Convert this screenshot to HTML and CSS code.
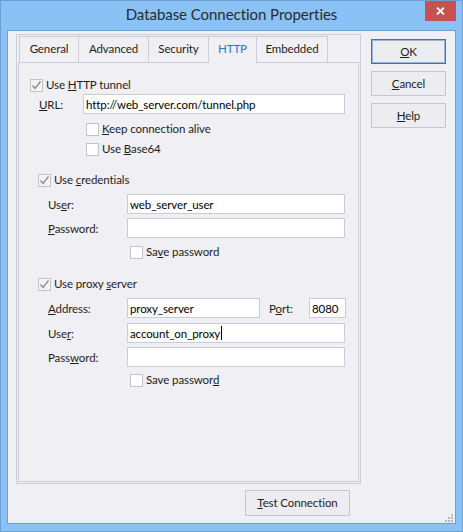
FILE: index.html
```html
<!DOCTYPE html>
<html>
<head>
<meta charset="utf-8">
<title>Database Connection Properties</title>
<link rel="stylesheet" href="styles.css">
</head>
<body>
<div class="window">
  <div class="titlebar">
    <div></div>
    <div class="title">Database Connection Properties</div>
    <div class="close">
      <svg width="9" height="8" viewBox="0 0 9 8"><path d="M1 0.5 L8 7.5 M8 0.5 L1 7.5" stroke="#fff" stroke-width="1.8" fill="none"/></svg>
    </div>
  </div>
  <div class="client">
    <div class="leftcol">
      <div class="tabbox">
        <div class="tabs">
          <div class="tab t-general">General</div>
          <div class="tab t-advanced">Advanced</div>
          <div class="tab t-security">Security</div>
          <div class="tab t-http sel">HTTP</div>
          <div class="tab t-embedded">Embedded</div>
        </div>
        <div class="panel">
          <div class="row chk r1 lvl1">
            <span class="cb on"><svg width="11" height="11" viewBox="0 0 11 11"><path d="M1.5 5.5 L4 8.5 L9.5 1.5" stroke="#8c8c8c" stroke-width="1.4" fill="none"/></svg></span>
            <span class="txt">Use <u>H</u>TTP tunnel</span>
          </div>
          <div class="row url">
            <span class="lbl lbl-url"><u>U</u>RL:</span>
            <span class="inp w-url">http://web_server.com/tunnel.php</span>
          </div>
          <div class="row chk r3 sub">
            <span class="cb"></span>
            <span class="txt"><u>K</u>eep connection alive</span>
          </div>
          <div class="row chk sub">
            <span class="cb"></span>
            <span class="txt">Use <u>B</u>ase64</span>
          </div>
          <div class="row chk r5 lvl2">
            <span class="cb on"><svg width="11" height="11" viewBox="0 0 11 11"><path d="M1.5 5.5 L4 8.5 L9.5 1.5" stroke="#8c8c8c" stroke-width="1.4" fill="none"/></svg></span>
            <span class="txt">Use <u>c</u>redentials</span>
          </div>
          <div class="row field m4">
            <span class="lbl lbl-f">Us<u>e</u>r:</span>
            <span class="inp w-f">web_server_user</span>
          </div>
          <div class="row field m4">
            <span class="lbl lbl-f"><u>P</u>assword:</span>
            <span class="inp w-f"></span>
          </div>
          <div class="row chk save m4">
            <span class="cb"></span>
            <span class="txt">Sa<u>v</u>e password</span>
          </div>
          <div class="row chk r9 lvl2">
            <span class="cb on"><svg width="11" height="11" viewBox="0 0 11 11"><path d="M1.5 5.5 L4 8.5 L9.5 1.5" stroke="#8c8c8c" stroke-width="1.4" fill="none"/></svg></span>
            <span class="txt">Use proxy <u>s</u>erver</span>
          </div>
          <div class="row field m4">
            <span class="lbl lbl-f"><u>A</u>ddress:</span>
            <span class="inp w-addr">proxy_server</span>
            <span class="lbl lbl-port">P<u>o</u>rt:</span>
            <span class="inp w-port">8080</span>
          </div>
          <div class="row field m5">
            <span class="lbl lbl-f">Use<u>r</u>:</span>
            <span class="inp w-f">account_on_proxy<span class="caret"></span></span>
          </div>
          <div class="row field m4">
            <span class="lbl lbl-f">Pass<u>w</u>ord:</span>
            <span class="inp w-f"></span>
          </div>
          <div class="row chk save m3">
            <span class="cb"></span>
            <span class="txt">Save passwor<u>d</u></span>
          </div>
        </div>
      </div>
      <div class="bottom">
        <div class="btn test"><span><u>T</u>est Connection</span></div>
      </div>
    </div>
    <div class="rightcol">
      <div class="btn ok"><span><u>O</u>K</span></div>
      <div class="btn"><span><u>C</u>ancel</span></div>
      <div class="btn"><span><u>H</u>elp</span></div>
    </div>
    <svg class="grip" width="8" height="8" viewBox="0 0 8 8">
      <rect x="6" y="0" width="2" height="2" fill="#b8b8bc"/>
      <rect x="3" y="3" width="2" height="2" fill="#b8b8bc"/>
      <rect x="6" y="3" width="2" height="2" fill="#b8b8bc"/>
      <rect x="0" y="6" width="2" height="2" fill="#b8b8bc"/>
      <rect x="3" y="6" width="2" height="2" fill="#b8b8bc"/>
      <rect x="6" y="6" width="2" height="2" fill="#b8b8bc"/>
    </svg>
  </div>
</div>
</body>
</html>
```
FILE: styles.css
```css
html, body {
  margin: 0;
  padding: 0;
}
body {
  background: #8ac2f5;
  font-family: Lato, "Noto Sans", sans-serif;
  font-size: 11.5px;
  letter-spacing: -0.1px;
  color: #1e1e1e;
}
u {
  text-decoration: underline;
  text-underline-offset: 1px;
}
.window {
  width: 463px;
  height: 532px;
  box-sizing: border-box;
  border: 1px solid #6d9fd2;
  padding: 0 6px 7px;
  display: flex;
  flex-direction: column;
  background: #8ac2f5;
}
.titlebar {
  height: 29px;
  flex: none;
  display: grid;
  grid-template-columns: 1fr auto 1fr;
  align-items: center;
}
.title {
  font-size: 15px;
  letter-spacing: -0.05px;
  color: #2b2b2b;
  padding-bottom: 3px;
}
.close {
  justify-self: end;
  align-self: start;
  width: 31px;
  height: 20px;
  background: #c75050;
  display: flex;
  align-items: center;
  justify-content: center;
}
.client {
  position: relative;
  box-sizing: border-box;
  height: 494px;
  border: 1px solid #6a9ed4;
  background: #efeff4;
  display: flex;
  gap: 10px;
  padding: 3px 0 0 8px;
}
.leftcol {
  display: flex;
  flex-direction: column;
  width: 345px;
}
.tabbox {
  box-sizing: border-box;
  width: 345px;
  height: 450px;
  border: 1px solid #cdcdd8;
  padding: 1px;
  display: flex;
  flex-direction: column;
}
.tabs {
  display: flex;
  padding-left: 1px;
  height: 26px;
  flex: none;
}
.tab {
  box-sizing: border-box;
  height: 26px;
  border: 1px solid #cdcdd8;
  border-bottom: none;
  display: flex;
  align-items: center;
  justify-content: center;
  padding-bottom: 2px;
  background: #efeff4;
}
.tab + .tab {
  margin-left: -1px;
}
.t-general { width: 60px; }
.t-advanced { width: 71px; }
.t-security { width: 61px; }
.t-http { width: 49px; }
.t-embedded { width: 72px; }
.tab.sel {
  color: #1a7ad0;
  height: 27px;
  position: relative;
  z-index: 1;
  padding-bottom: 3px;
}
.panel {
  box-sizing: border-box;
  height: 420px;
  border: 1px solid #cdcdd8;
  flex: none;
}
.row {
  display: flex;
  align-items: center;
  height: 20px;
  white-space: nowrap;
}
.txt {
  padding-bottom: 2px;
}
.r1 { margin-top: 13px; height: 18px; padding-left: 11px; }
.url { padding-left: 20px; }
.r3 { margin-top: 5px; }
.sub { padding-left: 67px; }
.lvl2 { padding-left: 19px; }
.r5 { margin-top: 11px; }
.r9 { margin-top: 12px; }
.field { padding-left: 29px; }
.save { padding-left: 111px; }
.m3 { margin-top: 3px; }
.m4 { margin-top: 4px; }
.m5 { margin-top: 5px; }
.cb {
  box-sizing: border-box;
  width: 13px;
  height: 13px;
  border: 1px solid #c2c2ca;
  background: #fff;
  margin-right: 3px;
  flex: none;
  display: flex;
  align-items: center;
  justify-content: center;
}
.cb.on {
  background: #f4f4f6;
}
.lbl {
  flex: none;
}
.lbl-url { width: 44px; }
.lbl-f { width: 79px; }
.lbl-port { width: 40px; margin-left: 9px; }
.inp {
  box-sizing: border-box;
  height: 20px;
  border: 1px solid #cbcbd5;
  background: #fff;
  padding-left: 2px;
  display: flex;
  align-items: center;
  flex: none;
  color: #000;
}
.w-url { width: 262px; }
.w-f { width: 218px; }
.w-addr { width: 133px; }
.w-port { width: 37px; }
.caret {
  display: inline-block;
  width: 1px;
  height: 14px;
  background: #000;
  margin-left: 1px;
}
.bottom {
  display: flex;
  justify-content: flex-end;
  padding-right: 11px;
  margin-top: 6px;
}
.btn {
  box-sizing: border-box;
  border: 1px solid #c6c6d0;
  background: #ececf1;
  display: flex;
  align-items: center;
  justify-content: center;
  color: #1e1e1e;
  padding-bottom: 1px;
}
.test {
  width: 105px;
  height: 26px;
}
.rightcol {
  display: flex;
  flex-direction: column;
  gap: 7px;
  padding-top: 5px;
}
.rightcol .btn {
  width: 75px;
  height: 25px;
}
.btn.ok {
  border-color: #2f78c4;
  box-shadow: inset 0 0 0 1px rgba(47, 120, 196, 0.45);
}
.grip {
  position: absolute;
  right: 2px;
  bottom: 1px;
}
```
